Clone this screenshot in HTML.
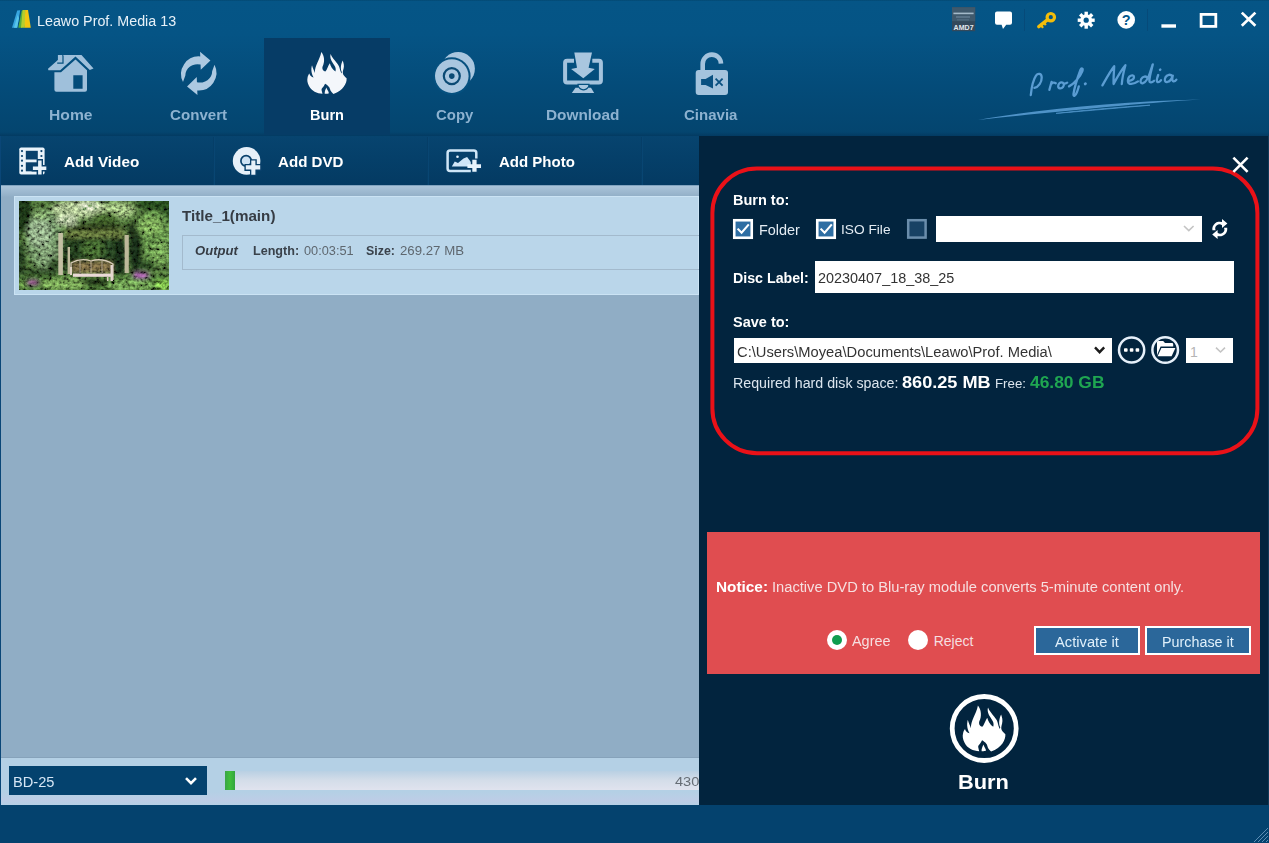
<!DOCTYPE html>
<html>
<head>
<meta charset="utf-8">
<title>Leawo Prof. Media 13</title>
<style>
*{box-sizing:border-box;margin:0;padding:0}
html,body{width:1269px;height:843px;overflow:hidden;background:#04426e;font-family:"Liberation Sans",sans-serif;}
body{position:relative}
.a{position:absolute}
.t{position:absolute;white-space:pre;line-height:1;transform-origin:0 50%;}
#top{left:0;top:0;width:1269px;height:136px;background:linear-gradient(#034872 0,#055586 1.5px,#055485 34px,#044c7a 82px,#04456f 132px,#033b62 136px)}
#tabburn{left:264px;top:38px;width:126px;height:97px;background:#063c66}
#toolbar{left:0;top:136px;width:699px;height:50px;background:linear-gradient(#07446f,#05406a 40%,#043a62)}
.tbsep{top:137px;width:2px;height:48px;background:linear-gradient(90deg,#043a62,#0a4a78)}
#list{left:0;top:185px;width:699px;height:572px;background:linear-gradient(#6d93b2 0,#a9c3d9 1.5px,#93b0c8 11px,#90adc5 12px)}
#row{left:14px;top:196px;width:685px;height:99px;background:#bad6ea;border:1px solid #cbe3f4}
#thumb{left:19px;top:201px;width:150px;height:89px;overflow:hidden;background:#4f6d3a}
#obox{left:182px;top:235px;width:530px;height:35px;border:1px solid #a3bacd;border-right:none}
#status{left:0;top:757px;width:699px;height:48px;background:linear-gradient(#b4d0e5 0,#b4d0e5 72%,#bdcde6 90%,#b6d0e6 100%);border-top:1px solid #86a2ba}
#bd{left:9px;top:766px;width:198px;height:29px;background:#04426e}
#track{left:225px;top:771px;width:474px;height:19px;background:linear-gradient(#b9d0e3,#d4dde9 50%,#e0e3ee)}
#green{left:225px;top:771px;width:10px;height:19px;background:linear-gradient(90deg,#3aa548,#3fbf3a 50%,#33a53f)}
#panel{left:699px;top:136px;width:570px;height:669px;background:#02243e;border-right:1px solid #123a58}
#bottom{left:0;top:805px;width:1269px;height:38px;background:#04426e}
#redrect{display:none}
.cb{width:20px;height:20px;top:219px;border:2px solid #fff;background:#2d6ea6}
.cb.off{border-color:#5d7f9c;background:#173d5f}
.inp{background:#fff}
#notice{left:707px;top:532px;width:553px;height:142px;background:#e04d50}
.btn{top:626px;height:29px;border:2px solid #fff;background:#2b679a}
.radio{width:20px;height:20px;border-radius:50%;background:#fff;top:630px}
#ledge{left:0;top:136px;width:1px;height:669px;background:#0a4677}
#redge{left:1268px;top:0;width:1px;height:136px;background:#0a4f80}
</style>
</head>
<body>
<div id="top" class="a"></div>
<div id="tabburn" class="a"></div>
<div id="toolbar" class="a"></div>
<div class="a tbsep" style="left:213px"></div>
<div class="a tbsep" style="left:427px"></div>
<div class="a tbsep" style="left:641px"></div>
<div id="list" class="a"></div>
<div id="row" class="a"></div>
<div id="thumb" class="a"></div>
<div id="obox" class="a"></div>
<div id="status" class="a"></div>
<div id="bd" class="a"></div>
<div id="track" class="a"></div>
<div id="green" class="a"></div>
<div id="panel" class="a"></div>
<div id="bottom" class="a"></div>
<div id="redrect" class="a"></div>
<div class="a inp" style="left:936px;top:216px;width:265.5px;height:25.7px"></div>
<div class="a inp" style="left:815px;top:261px;width:419px;height:32px"></div>
<div class="a inp" style="left:734px;top:338px;width:378px;height:25px"></div>
<div class="a inp" style="left:1186px;top:338px;width:47px;height:25px"></div>
<div id="notice" class="a"></div>
<div class="a radio" style="left:827px"></div>
<div class="a radio" style="left:908px"></div>
<div class="a" style="left:832px;top:635px;width:10px;height:10px;border-radius:50%;background:#0f9d4f"></div>
<div class="a btn" style="left:1034px;width:106px"></div>
<div class="a btn" style="left:1145px;width:106px"></div>
<div id="ledge" class="a"></div>

<svg class="a" style="left:19px;top:201px" width="150" height="89" viewBox="0 0 150 89">
<defs>
<filter id="tb" x="-10%" y="-10%" width="120%" height="120%"><feGaussianBlur stdDeviation="2.2"/></filter>
<filter id="tb1" x="-10%" y="-10%" width="120%" height="120%"><feGaussianBlur stdDeviation="0.9"/></filter>
<filter id="tb0" x="-10%" y="-10%" width="120%" height="120%"><feGaussianBlur stdDeviation="0.6"/></filter>
<filter id="tex" x="0" y="0" width="100%" height="100%">
<feTurbulence type="fractalNoise" baseFrequency="0.27 0.3" numOctaves="3" seed="11" result="n"/>
<feColorMatrix in="n" type="matrix" values="1.7 0 0 0 -0.33  1.7 0 0 0 -0.33  1.7 0 0 0 -0.33  0 0 0 0 1" result="g"/>
<feBlend in="g" in2="SourceGraphic" mode="overlay" result="o"/>
<feGaussianBlur in="o" stdDeviation="0.45"/>
</filter>
<clipPath id="tc"><rect width="150" height="89"/></clipPath>
</defs>
<g clip-path="url(#tc)">
<g filter="url(#tex)">
<rect width="150" height="89" fill="#4c6e38"/>
<g filter="url(#tb)">
<!-- dark corners -->
<ellipse cx="3" cy="12" rx="10" ry="20" fill="#1a3419"/>
<ellipse cx="138" cy="2" rx="20" ry="9" fill="#274a1f"/>
<ellipse cx="148" cy="14" rx="5" ry="9" fill="#2d5223"/>
<ellipse cx="1" cy="58" rx="5" ry="16" fill="#213b1c"/>
<!-- left bush -->
<ellipse cx="25" cy="38" rx="18" ry="30" fill="#6c8c61"/>
<ellipse cx="21" cy="32" rx="12" ry="15" fill="#8da883"/>
<ellipse cx="29" cy="54" rx="9" ry="9" fill="#7c9a70"/>
<ellipse cx="22" cy="14" rx="9" ry="5" fill="#7ea267"/>
<!-- dark band at left-bottom of bush -->
<ellipse cx="18" cy="72" rx="20" ry="4" fill="#2a4524"/>
<ellipse cx="35" cy="64" rx="6" ry="8" fill="#2f4a28"/>
<!-- top pale vines -->
<ellipse cx="62" cy="8" rx="30" ry="9" fill="#a9be8e"/>
<ellipse cx="100" cy="9" rx="16" ry="8" fill="#9cba7d"/>
<ellipse cx="48" cy="19" rx="11" ry="6" fill="#b4c4a0"/>
<ellipse cx="70" cy="5" rx="10" ry="4" fill="#c4d2b2"/>
<ellipse cx="86" cy="17" rx="14" ry="6" fill="#42632c"/>
<!-- right bush -->
<ellipse cx="134" cy="36" rx="18" ry="27" fill="#608c46"/>
<ellipse cx="131" cy="25" rx="12" ry="9" fill="#7ca858"/>
<ellipse cx="141" cy="52" rx="9" ry="12" fill="#719f52"/>
<ellipse cx="117" cy="50" rx="6.5" ry="22" fill="#182c14"/>
<ellipse cx="113" cy="30" rx="4" ry="9" fill="#1b2f15"/>
<ellipse cx="128" cy="64" rx="8" ry="5" fill="#2c4a24"/>
<!-- pergola roof shadow -->
<ellipse cx="76" cy="26.5" rx="29" ry="4" fill="#2f3f1c"/>
<rect x="46" y="29.5" width="60" height="7.5" fill="#62733a"/>
<!-- interior -->
<rect x="45" y="37" width="61" height="35" fill="#274220"/>
<ellipse cx="74" cy="48" rx="12" ry="9" fill="#42662f"/>
<ellipse cx="55" cy="50" rx="5" ry="12" fill="#223a1c"/>
<rect x="96" y="38" width="9" height="36" fill="#172c13"/>
<ellipse cx="46.5" cy="50" rx="2.2" ry="14" fill="#1f351a"/>
<!-- bench back -->
<rect x="53" y="60.5" width="40" height="11.5" fill="#76663f"/>
<!-- ground -->
<rect x="0" y="75" width="150" height="14" fill="#4a7434"/>
<ellipse cx="45" cy="83" rx="24" ry="6" fill="#77a355"/>
<ellipse cx="112" cy="84" rx="24" ry="5.5" fill="#709f52"/>
<ellipse cx="76" cy="81" rx="14" ry="3.5" fill="#1a2c12"/>
<ellipse cx="145" cy="84" rx="9" ry="5" fill="#84c450"/>
<ellipse cx="14" cy="81.5" rx="7" ry="3" fill="#7e5078"/>
<ellipse cx="122" cy="74.5" rx="8.5" ry="3.2" fill="#93549a"/>
<ellipse cx="3" cy="85" rx="4" ry="4" fill="#6a9a4a"/>
</g>
</g>
<!-- crisp structure -->
<g filter="url(#tb0)">
<rect x="39.3" y="32" width="4.6" height="42" fill="#c3bfa3"/>
<rect x="48.6" y="46" width="2.4" height="27" fill="#bfba9c"/>
<rect x="105.6" y="34" width="4.2" height="38" fill="#bdb89a"/>
<path d="M52,73 V62 Q62,56.5 72,60 Q83,56.5 94,63 V79" fill="none" stroke="#d9cdb8" stroke-width="1.3"/>
<path d="M61,60 V72 M72,60 V72 M83,60 V72" stroke="#c9bba0" stroke-width="0.9"/>
<rect x="54" y="72.6" width="40" height="3.2" fill="#ead9d6"/>
<rect x="91.5" y="64" width="2.4" height="16" fill="#e6d8d0"/>
<rect x="51" y="66" width="2" height="8" fill="#e0d4c6"/>
<rect x="88" y="76" width="1.5" height="4" fill="#d8c8c0"/>
</g>
<g filter="url(#tb1)">
<ellipse cx="13.5" cy="81.5" rx="4.5" ry="1.6" fill="#a6509c" opacity="0.45"/>
<ellipse cx="121.5" cy="74.4" rx="6" ry="1.9" fill="#b866b8" opacity="0.6"/>
</g>
</g>
</svg>

<div class="t" style="left:36.7px;top:14.4px;font-size:14px;color:#e8f1f8;transform:scaleX(1.0213);">Leawo Prof. Media 13</div>
<div class="t" style="left:49.1px;top:107.0px;font-size:15.2px;color:#8db2d0;font-weight:bold;transform:scaleX(1.0312);">Home</div>
<div class="t" style="left:170.1px;top:107.0px;font-size:15.2px;color:#8db2d0;font-weight:bold;transform:scaleX(0.9953);">Convert</div>
<div class="t" style="left:309.6px;top:107.0px;font-size:15.2px;color:#ffffff;font-weight:bold;transform:scaleX(0.9600);">Burn</div>
<div class="t" style="left:435.5px;top:107.0px;font-size:15.2px;color:#8db2d0;font-weight:bold;transform:scaleX(0.9829);">Copy</div>
<div class="t" style="left:545.7px;top:107.0px;font-size:15.2px;color:#8db2d0;font-weight:bold;transform:scaleX(1.0118);">Download</div>
<div class="t" style="left:683.8px;top:107.0px;font-size:15.2px;color:#8db2d0;font-weight:bold;transform:scaleX(0.9887);">Cinavia</div>
<div class="t" style="left:64.3px;top:155.2px;font-size:14.5px;color:#ffffff;font-weight:bold;transform:scaleX(1.0534);">Add Video</div>
<div class="t" style="left:278.1px;top:155.2px;font-size:14.5px;color:#ffffff;font-weight:bold;transform:scaleX(1.0415);">Add DVD</div>
<div class="t" style="left:499.1px;top:155.2px;font-size:14.5px;color:#ffffff;font-weight:bold;transform:scaleX(1.0348);">Add Photo</div>
<div class="t" style="left:181.7px;top:208.5px;font-size:14.5px;color:#363c44;font-weight:bold;transform:scaleX(1.0478);">Title_1(main)</div>
<div class="t" style="left:194.5px;top:244.8px;font-size:12px;color:#363c44;font-weight:bold;font-style:italic;transform:scaleX(1.0883);">Output</div>
<div class="t" style="left:253.0px;top:244.8px;font-size:12px;color:#3a424b;font-weight:bold;transform:scaleX(1.0477);">Length:</div>
<div class="t" style="left:304.2px;top:244.8px;font-size:12px;color:#5e676f;transform:scaleX(1.0617);">00:03:51</div>
<div class="t" style="left:365.5px;top:244.8px;font-size:12px;color:#3a424b;font-weight:bold;transform:scaleX(1.0316);">Size:</div>
<div class="t" style="left:399.5px;top:244.8px;font-size:12px;color:#5e676f;transform:scaleX(1.1026);">269.27 MB</div>
<div class="t" style="left:12.5px;top:775.2px;font-size:14px;color:#d6e6f5;transform:scaleX(1.0431);">BD-25</div>
<div class="t" style="left:675.2px;top:774.6px;font-size:13.5px;color:#666d75;transform:scaleX(1.0807);">430</div>
<div class="t" style="left:733.2px;top:193.0px;font-size:14px;color:#ffffff;font-weight:bold;transform:scaleX(1.0361);">Burn to:</div>
<div class="t" style="left:758.5px;top:222.7px;font-size:14px;color:#e4ecf3;transform:scaleX(1.0306);">Folder</div>
<div class="t" style="left:840.9px;top:223.2px;font-size:13.5px;color:#e4ecf3;transform:scaleX(1.0161);">ISO File</div>
<div class="t" style="left:733.2px;top:271.1px;font-size:14px;color:#ffffff;font-weight:bold;transform:scaleX(1.0147);">Disc Label:</div>
<div class="t" style="left:817.7px;top:271.1px;font-size:14px;color:#333333;transform:scaleX(1.0297);">20230407_18_38_25</div>
<div class="t" style="left:733.2px;top:314.6px;font-size:14px;color:#ffffff;font-weight:bold;transform:scaleX(1.0355);">Save to:</div>
<div class="t" style="left:737.0px;top:344.8px;font-size:14px;color:#333333;transform:scaleX(1.0511);">C:\Users\Moyea\Documents\Leawo\Prof. Media\</div>
<div class="t" style="left:733.2px;top:376.1px;font-size:14px;color:#dbe5ee;transform:scaleX(1.0169);">Required hard disk space:</div>
<div class="t" style="left:902.0px;top:374.0px;font-size:16.5px;color:#ffffff;font-weight:bold;transform:scaleX(1.0983);">860.25 MB</div>
<div class="t" style="left:995.0px;top:376.6px;font-size:13.5px;color:#dbe5ee;transform:scaleX(0.9821);">Free:</div>
<div class="t" style="left:1030.0px;top:374.0px;font-size:16.5px;color:#1fa651;font-weight:bold;transform:scaleX(1.0542);">46.80 GB</div>
<div class="t" style="left:1190.0px;top:344.8px;font-size:14px;color:#b5b5b5;">1</div>
<div class="t" style="left:716.2px;top:580.0px;font-size:14px;color:#ffffff;font-weight:bold;transform:scaleX(1.0958);">Notice:</div>
<div class="t" style="left:772.2px;top:580.0px;font-size:14px;color:#f6dfe0;transform:scaleX(1.0496);">Inactive DVD to Blu-ray module converts 5-minute content only.</div>
<div class="t" style="left:851.7px;top:633.7px;font-size:14px;color:#f6dfe0;transform:scaleX(1.0305);">Agree</div>
<div class="t" style="left:933.7px;top:633.7px;font-size:14px;color:#f6dfe0;">Reject</div>
<div class="t" style="left:1055.2px;top:635.1px;font-size:14px;color:#e0f0fb;transform:scaleX(1.0510);">Activate it</div>
<div class="t" style="left:1162.2px;top:635.1px;font-size:14px;color:#e0f0fb;transform:scaleX(1.0236);">Purchase it</div>
<div class="t" style="left:958.2px;top:770.6px;font-size:21px;color:#ffffff;font-weight:bold;transform:scaleX(1.0388);">Burn</div>
<svg class="a" style="left:0;top:0" width="1269" height="843" viewBox="0 0 1269 843">
<defs>
<path id="flame" d="M15.5,41.7 C10,41.6 4.5,39 2,34 C0.4,31 0,28 0.5,26 C0.8,24 1.5,22.5 2.4,21.5 C2.8,23.5 4.5,25 6.6,25.4 C4.8,22.5 3.6,18 5,13.2 C5.6,16 7.2,18.5 7.9,20.9 C7.5,14 12.8,8 14.3,0.1 C17.5,4 18,10 15.6,14.5 C14.8,16.5 15.8,19 18.1,19.6 C19.6,19.4 20.6,14.5 22.9,11.3 C23.4,14 25.5,17.5 28.4,19.6 C29,18 28.8,16 28,14.6 C26.8,12 24.4,9.5 23.6,6.5 C23.2,4.8 23.2,3.4 23.6,2 C24.6,5 27.6,8 29.4,10.4 C30.8,12.3 32,13.6 32.4,15.4 C33,17.5 33.4,19.5 34.4,21.5 L34.9,20 C33.2,17 33.8,12 35.7,8.4 C36.6,11 37.4,13.5 36.6,16.5 C36,18.8 35.4,20.5 36.2,22.4 C37,24 38.5,25 39.6,26.3 C40,31 36.5,38.5 26.4,42 C25.2,41 24.2,39.8 23.6,38.8 C23,37 22.6,35.5 22,35 C21,33.5 19.2,32.4 18.1,31.8 C17.4,33 16.8,34.2 16.2,35 C15,36.2 14.4,37 14.6,38.2 C14.8,39.6 15.2,40.6 15.5,41.7 Z M17.7,41.7 C17.5,39.4 18.6,37.4 19.4,35.6 C19.9,37.6 21.4,38.8 21.9,41.2 C20.8,41.8 19,42 17.7,41.7 Z"/>
<g id="carrow"><path d="M-15.75,8.6 A17.7,17.7 0 0 1 1.5,-17 L1.3,-21.6 L11.7,-13 L2,-3.6 L1.8,-8.8 A12,11.3 0 0 0 -13.4,2.2 Z"/></g>
</defs>

<!-- logo -->
<g>
<polygon points="12,27.8 17.2,10.5 20.2,10.2 17.2,27.8" fill="#38a6e0"/>
<polygon points="14,27.8 17.2,27.8 19,18 17.6,15" fill="#58c6ea"/>
<polygon points="18.3,27.8 21.6,10.8 23.8,10 22,27.8" fill="#56ae3c"/>
<polygon points="21,27.8 22.6,10 25.8,10 24.8,27.8" fill="#b5cd2f"/>
<polygon points="24.6,27.8 25.2,10 28,10 30.8,27.8" fill="#f2c511"/>
</g>

<!-- HOME icon -->
<g fill="#9fc0db">
<path d="M48,68.8 L63.5,55 H81.5 L93.5,68.6 L89.8,70 L75.5,56.4 L60.2,70.2 H48.4 Z"/>
<rect x="57.9" y="55" width="4.4" height="7.6"/>
<path d="M54.4,72.2 H61 L75.5,59.4 L87,70.2 V89.8 a2,2 0 0 1 -2,2 H56.4 a2,2 0 0 1 -2,-2 Z M73.3,75.2 V88.8 H82.6 V75.2 Z" fill-rule="evenodd"/>
</g>
<path d="M57.2,63.2 H63 V55.4" fill="none" stroke="#05507f" stroke-width="1.2"/>

<!-- CONVERT icon -->
<g fill="#adc9e1" transform="translate(198.75,73.4)">
<use href="#carrow"/>
<use href="#carrow" transform="rotate(180)"/>
</g>

<!-- BURN nav icon -->
<use href="#flame" transform="translate(307,52)" fill="#f4f7fb"/>

<!-- COPY icon -->
<g>
<circle cx="458.1" cy="68.8" r="16.8" fill="#a9c6df"/>
<circle cx="451.8" cy="76.1" r="18.8" fill="#05507f"/>
<circle cx="451.8" cy="76.1" r="16.8" fill="#a9c6df"/>
<circle cx="451.8" cy="76.1" r="8" fill="none" stroke="#0b4a74" stroke-width="2.2"/>
<circle cx="451.8" cy="76.1" r="2.8" fill="#0b4a74"/>
</g>

<!-- DOWNLOAD icon -->
<g>
<path d="M574,60.8 H567.1 a2,2 0 0 0 -2,2 V80.4 a2,2 0 0 0 2,2 H598.9 a2,2 0 0 0 2,-2 V62.8 a2,2 0 0 0 -2,-2 H592.3" fill="none" stroke="#a4c3dd" stroke-width="4"/>
<path d="M574.3,52.4 H592 L588.6,67.8 L594.8,69 L583.3,78.2 L571.1,69 L577,67.8 Z" fill="#a9c6df"/>
<path d="M578,84.4 H589 A5.5,5.5 0 0 1 578,84.4 Z" fill="#a9c6df" stroke="#05507f" stroke-width="1.2"/>
<path d="M575.5,87.8 H578.6 A5.8,5.8 0 0 0 588.4,87.8 H591 L594.2,93 H571.8 Z" fill="#a9c6df"/>
</g>

<!-- CINAVIA icon -->
<g>
<path d="M702.7,71 V64 A9.15,9.15 0 0 1 721,63.6" fill="none" stroke="#a4c3dd" stroke-width="4.6"/>
<rect x="695.7" y="70" width="32.3" height="25" rx="3" fill="#a4c3dd"/>
<path d="M701.1,79 H705.6 L713,74.8 V88.6 L705.6,85 H701.1 Z" fill="#0a5181"/>
<path d="M715.6,78.7 L722.6,85.7 M722.6,78.7 L715.6,85.7" stroke="#0a5181" stroke-width="1.8" fill="none"/>
</g>

<!-- ADD VIDEO icon -->
<g>
<rect x="19.3" y="147.5" width="25.3" height="27.1" rx="1.8" fill="#e9f3fb"/>
<rect x="25.8" y="150.8" width="12" height="8.7" fill="#0a416c"/>
<rect x="25.8" y="162.3" width="12" height="9" fill="#0a416c"/>
<g fill="#0a416c">
<circle cx="22" cy="151.1" r="1.1"/><circle cx="22" cy="156" r="1.1"/><circle cx="22" cy="160.7" r="1.1"/><circle cx="22" cy="165.8" r="1.1"/><circle cx="22" cy="170.7" r="1.1"/>
<circle cx="41.4" cy="151.1" r="1.1"/><circle cx="41.4" cy="156" r="1.1"/>
</g>
<path d="M36.6,159 H43 V165 H47.6 V171.4 H43 V175.6 H36.6 V171.4 H31.6 V165 H36.6 Z" fill="#0a416c"/>
<path d="M38.1,160.4 H41.6 V166.4 H46.3 V169.9 H41.6 V174.4 H38.1 V169.9 H32.9 V166.4 H38.1 Z" fill="#e9f3fb"/>
</g>

<!-- ADD DVD icon -->
<g>
<circle cx="246.6" cy="160.9" r="13.8" fill="#e6f0f9"/>
<circle cx="246.1" cy="160.9" r="5.2" fill="#cfe3f4" stroke="#0a416c" stroke-width="1.7"/>
<path d="M250,159.2 H256.8 V164 H261.5 V171 H256.8 V176 H250 V171 H244.4 V164 H250 Z" fill="#0a416c"/>
<path d="M251.3,160.6 H255.4 V165.3 H260.2 V169.6 H255.4 V174.8 H251.3 V169.6 H245.8 V165.3 H251.3 Z" fill="#e6f0f9"/>
</g>

<!-- ADD PHOTO icon -->
<g>
<rect x="447.6" y="150.4" width="28.7" height="20.5" rx="2.5" fill="none" stroke="#cfe6f7" stroke-width="2.5"/>
<path d="M451.8,166.6 L454.8,161.5 L458,163 L463.5,158.5 L467.1,157 L470.9,162 L471.5,166.6 Z" fill="#cfe6f7"/>
<circle cx="457.5" cy="156.8" r="1.3" fill="#e6f3fc"/>
<path d="M470.8,158.4 H478 V162.8 H482.4 V169.4 H478 V173.2 H470.8 V169.4 H466,162.8 H470.8 Z" fill="#09406b"/>
<path d="M472.3,159.8 H476.6 V164.2 H481 V168 H476.6 V171.8 H472.3 V168 H467.4 V164.2 H472.3 Z" fill="#e6f3fc"/>
</g>

<!-- titlebar icons -->
<g>
<rect x="952" y="7.2" width="23.2" height="24" fill="#34495b"/>
<rect x="952" y="7.2" width="23.2" height="14" fill="#3f596c"/>
<rect x="953.4" y="12.6" width="20.2" height="1.6" fill="#a4bac9"/>
<rect x="956" y="16.4" width="14" height="1.2" fill="#6b8598"/>
<rect x="957" y="19.4" width="12" height="1" fill="#587386"/>
<text x="963.6" y="29.6" font-family="Liberation Sans" font-size="7" font-weight="bold" fill="#e4eaef" text-anchor="middle" textLength="20">AMD7</text>
<!-- chat -->
<path d="M997,11.5 H1010 a2,2 0 0 1 2,2 V22.7 a2,2 0 0 1 -2,2 H1006.2 L1003,29 L1001.6,24.7 H997 a2,2 0 0 1 -2,-2 V13.5 a2,2 0 0 1 2,-2 Z" fill="#fff"/>
<rect x="1024" y="9" width="1" height="22" fill="#064a79"/>
<!-- key -->
<g fill="none" stroke="#f3bd0a">
<circle cx="1050.8" cy="17.2" r="3.7" stroke-width="3.2"/>
<path d="M1047,20.2 L1038.8,26.6" stroke-width="3.4" stroke-linecap="round"/>
<path d="M1041,25 L1043,27.8 M1044,22.6 L1045.8,25.2" stroke-width="2.2"/>
</g>
<!-- gear -->
<g transform="translate(1086.2,20.2)" fill="#fff">
<circle r="5.9"/>
<g id="teeth"><rect x="-1.7" y="-8.5" width="3.4" height="17"/><rect x="-8.5" y="-1.7" width="17" height="3.4"/></g>
<use href="#teeth" transform="rotate(45)"/>
<circle r="2.6" fill="#04568a"/>
</g>
<!-- help -->
<circle cx="1126.2" cy="19.9" r="8.8" fill="#fff"/>
<text x="1126.2" y="25.2" font-family="Liberation Sans" font-size="14.5" font-weight="bold" fill="#04568a" text-anchor="middle">?</text>
<rect x="1147" y="9" width="1" height="22" fill="#064a79"/>
<!-- min max close -->
<rect x="1161.4" y="24.3" width="14.6" height="3.4" fill="#fff"/>
<rect x="1201.1" y="14.4" width="14.7" height="12" fill="none" stroke="#fff" stroke-width="2.8"/>
<path d="M1241.8,12.6 L1255.4,25.8 M1255.4,12.6 L1241.8,25.8" stroke="#fff" stroke-width="2.7" fill="none"/>
</g>

<!-- Prof. Media script -->
<g fill="none" stroke="#5b9dd3" stroke-width="2.3" stroke-linecap="round" stroke-linejoin="round">
<path d="M1030.8,95 C1031.5,88 1033,80 1036,75.6 C1038,72.8 1041.6,73.4 1041.7,77.5 C1041.8,82 1038.6,87 1034.4,87.8"/>
<path d="M1051.6,81.8 L1049.4,89.8 M1050.8,84.8 C1052,82.6 1054,82 1055.8,83.2"/>
<path d="M1062.5,82.6 C1060,81.8 1058.2,84 1058.2,86.2 C1058.2,88.8 1061.4,89 1063,87 C1064.4,85.2 1064,83 1062.5,82.6 C1063.4,83.6 1065.4,83.8 1067.2,82.6"/>
<path d="M1069,86.4 C1074,84 1080,77 1082.4,71 C1083.4,68 1081.4,67.6 1080.4,70 C1077.4,78 1074.4,88 1073.5,94 C1073.2,97 1075.5,96 1077,92 C1078,89.6 1078.4,87.6 1078.8,86.4"/>
<path d="M1085.2,83.9 L1085.5,83.7" stroke-width="2.8"/>
<path d="M1102.4,85.4 C1106,79 1110,71.5 1114.2,66.2 C1114,72 1113.3,78 1113.6,84 C1117,77.5 1121,70.5 1125.4,65.2 C1123.8,71 1122.2,78 1121.8,84"/>
<path d="M1128,81 C1131,80.6 1134,79 1134,77 C1134,75 1131.4,74.6 1129.4,76.6 C1127.4,79 1127.2,83 1129.8,83.8 C1132.4,84.4 1135.6,83 1138,81.4"/>
<path d="M1147.4,78 C1146.2,75.6 1142.8,76.2 1141.2,79 C1139.8,81.6 1140.8,83.8 1143,83.2 C1146,82.2 1148.4,78 1150.2,72 C1151.2,69 1152.2,66 1152.8,64.4 C1151.4,70 1149.2,77.5 1149.4,81 C1149.6,83.2 1152,82.4 1154,80.8"/>
<path d="M1158.2,75 C1157.2,77.6 1156.2,80.6 1157.2,81.8 C1158.2,82.6 1159.8,81.6 1161,80.2"/>
<path d="M1160,69.9 L1160.3,69.6" stroke-width="2.4"/>
<path d="M1172.4,76.4 C1170.6,73.8 1167,74.4 1165.4,77.4 C1164,80.2 1165,82.4 1167.2,82 C1170,81.4 1172,78.4 1172.8,75.6 C1172.2,78.4 1172,81 1173.4,81.4 C1174.6,81.6 1175.6,80.8 1176.4,79.6"/>
</g>
<path d="M978,119.9 C1040,109.2 1120,101.4 1201,99.6 C1150,102.4 1060,111.4 978,119.9 Z" fill="#4f93c8"/>
<path d="M1056,113.4 C1090,109.6 1120,107 1150,105.2 C1120,107.8 1090,110.6 1056,113.4 Z" fill="#4f93c8" stroke="#4f93c8" stroke-width="0.7"/>
<rect x="712.4" y="168.5" width="545" height="284.7" rx="44.5" ry="44.5" fill="none" stroke="#ea1118" stroke-width="4"/>
<!-- panel close X -->
<path d="M1233.4,157.6 L1247.6,171.8 M1247.6,157.6 L1233.4,171.8" stroke="#fff" stroke-width="2.6" fill="none"/>

<!-- checkboxes -->
<rect x="734.25" y="220.25" width="17.5" height="17.5" fill="#2e6ea3" stroke="#fff" stroke-width="2.6"/>
<rect x="817.25" y="220.25" width="17.5" height="17.5" fill="#2e6ea3" stroke="#fff" stroke-width="2.6"/>
<rect x="908.2" y="220.2" width="17.4" height="17.4" fill="#184264" stroke="#6a8dab" stroke-width="2.5"/>
<path d="M737.6,228.6 L741.6,232.8 L748.8,224.4" fill="none" stroke="#fff" stroke-width="2.1"/>
<path d="M820.6,228.6 L824.6,232.8 L831.8,224.4" fill="none" stroke="#fff" stroke-width="2.1"/>
<!-- combo chevrons -->
<path d="M1184,226 L1188.8,230.6 L1193.6,226" fill="none" stroke="#c4c4c4" stroke-width="1.6"/>
<path d="M1095,347.4 L1099.6,352.2 L1104.2,347.4" fill="none" stroke="#1b1b1b" stroke-width="2.4"/>
<path d="M1216,347.6 L1220.5,352 L1225,347.6" fill="none" stroke="#c4c4c4" stroke-width="1.6"/>
<path d="M186,778.2 L191,783.2 L196,778.2" fill="none" stroke="#fff" stroke-width="2.6"/>
<!-- refresh -->
<g transform="translate(1219.8,229)" fill="#fff">
<g id="rf"><path d="M-7.4,1.2 A7.4,7.4 0 0 1 2.2,-7 L2.2,-10 L7.6,-5.4 L2.2,-1 L2.2,-3.8 A4.2,4.2 0 0 0 -4.2,1.2 Z"/></g>
<use href="#rf" transform="rotate(180)"/>
</g>
<!-- ... button -->
<circle cx="1131.6" cy="350" r="12.6" fill="none" stroke="#e6f0fa" stroke-width="2.5"/>
<rect x="1124" y="348.2" width="3.6" height="3.6" rx="0.8" fill="#fff"/><rect x="1129.8" y="348.2" width="3.6" height="3.6" rx="0.8" fill="#fff"/><rect x="1135.6" y="348.2" width="3.6" height="3.6" rx="0.8" fill="#fff"/>
<!-- folder button -->
<circle cx="1165.2" cy="350" r="12.8" fill="none" stroke="#e6f0fa" stroke-width="2.5"/>
<path d="M1157,355.2 V342.2 a1.2,1.2 0 0 1 1.2,-1.2 H1163.2 L1165,343 H1172 a1.2,1.2 0 0 1 1.2,1.2 V346.6 H1160.6 Z" fill="#fff"/>
<path d="M1157.6,356.2 L1161.4,347.9 H1175.4 L1171.6,356.2 Z" fill="#fff"/>

<!-- burn button -->
<circle cx="984.2" cy="728.5" r="32" fill="none" stroke="#fff" stroke-width="4.8"/>
<use href="#flame" transform="translate(962.4,705.3) scale(1.085,1.1)" fill="#fff"/>

<!-- resize grip -->
<g stroke="#5d8db3" stroke-width="1">
<path d="M1254,842 L1268,828 M1258,842 L1268,832 M1262,842 L1268,836 M1266,842 L1268,840"/>
</g>
</svg>

</body>
</html>
